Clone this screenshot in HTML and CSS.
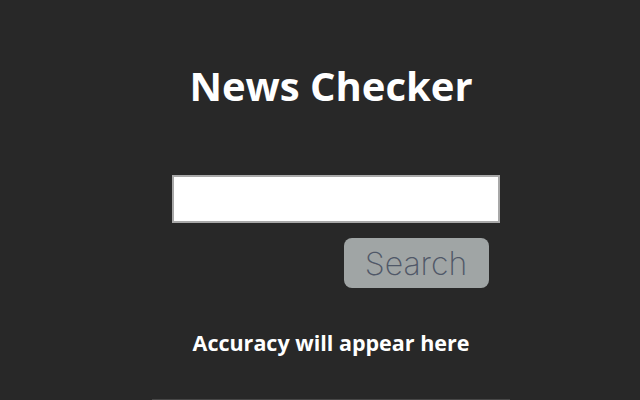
FILE: index.html
```html
<!DOCTYPE html>
<html>
<head>
<meta charset="utf-8">
<link rel="stylesheet" href="styles.css">
</head>
<body>
<div class="app">
  <h1 class="title">News Checker</h1>
  <div class="form">
    <input class="query" type="text">
    <button class="search">Search</button>
  </div>
  <p class="result">Accuracy will appear here</p>
  <div class="panel"></div>
</div>
</body>
</html>
```
FILE: styles.css
```css
html, body {
  margin: 0;
  padding: 0;
  background: #282828;
  height: 100%;
  overflow: hidden;
}
.app {
  width: 640px;
  display: flex;
  flex-direction: column;
  align-items: center;
  font-family: "Open Sans", "DejaVu Sans", sans-serif;
}
.title {
  margin: 61px 0 0 0;
  font-size: 40px;
  line-height: 50px;
  font-weight: 700;
  color: #ffffff;
  padding-left: 22px;
}
.form {
  margin-top: 64px;
  width: 328px;
  display: flex;
  flex-direction: column;
  align-items: flex-end;
  margin-left: 31px;
}
.query {
  box-sizing: border-box;
  width: 328px;
  height: 48px;
  border: 2px solid #a8a8a8;
  background: #ffffff;
  margin: 0;
}
.search {
  margin-top: 15px;
  margin-right: 11px;
  width: 145px;
  height: 50px;
  border: none;
  border-radius: 8px;
  background: #a0a5a5;
  color: #505868;
  font-family: "Inter", sans-serif;
  font-weight: 200;
  font-size: 32px;
  padding: 0;
}
.result {
  margin: 42px 0 0 0;
  padding-left: 22px;
  font-size: 21.5px;
  line-height: 26px;
  font-weight: 700;
  color: #ffffff;
}
.panel {
  margin-top: 43px;
  margin-left: 22px;
  width: 358px;
  height: 10px;
  border-top: 1px solid #474747;
}
```
